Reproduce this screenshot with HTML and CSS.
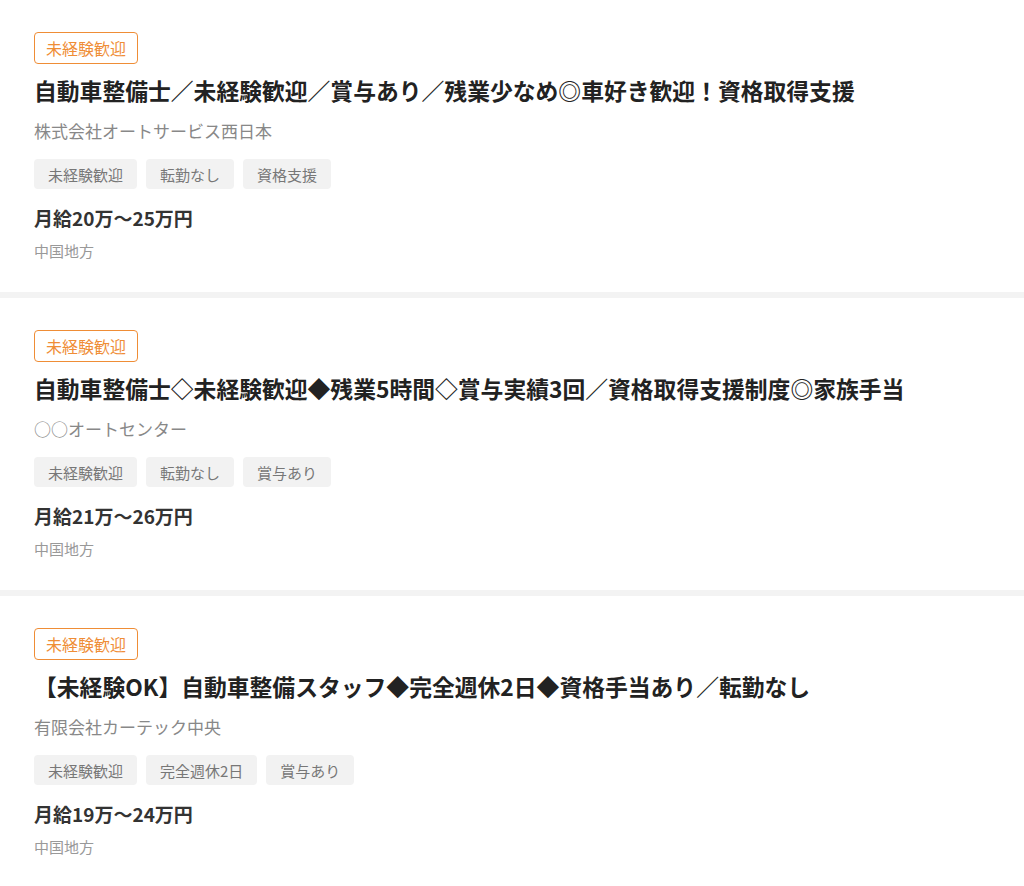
FILE: index.html
```html
<!DOCTYPE html>
<html lang="ja">
<head>
<meta charset="utf-8">
<title>求人一覧</title>
<link rel="stylesheet" href="styles.css">
</head>
<body>
<main class="list">
  <article class="job">
    <span class="badge">未経験歓迎</span>
    <h2 class="title">自動車整備士／未経験歓迎／賞与あり／残業少なめ◎車好き歓迎！資格取得支援</h2>
    <p class="company">株式会社オートサービス西日本</p>
    <ul class="tags">
      <li class="tag">未経験歓迎</li>
      <li class="tag">転勤なし</li>
      <li class="tag">資格支援</li>
    </ul>
    <p class="salary">月給20万～25万円</p>
    <p class="area">中国地方</p>
  </article>
  <article class="job">
    <span class="badge">未経験歓迎</span>
    <h2 class="title">自動車整備士◇未経験歓迎◆残業5時間◇賞与実績3回／資格取得支援制度◎家族手当</h2>
    <p class="company">○○オートセンター</p>
    <ul class="tags">
      <li class="tag">未経験歓迎</li>
      <li class="tag">転勤なし</li>
      <li class="tag">賞与あり</li>
    </ul>
    <p class="salary">月給21万～26万円</p>
    <p class="area">中国地方</p>
  </article>
  <article class="job">
    <span class="badge">未経験歓迎</span>
    <h2 class="title">【未経験OK】自動車整備スタッフ◆完全週休2日◆資格手当あり／転勤なし</h2>
    <p class="company">有限会社カーテック中央</p>
    <ul class="tags">
      <li class="tag">未経験歓迎</li>
      <li class="tag">完全週休2日</li>
      <li class="tag">賞与あり</li>
    </ul>
    <p class="salary">月給19万～24万円</p>
    <p class="area">中国地方</p>
  </article>
</main>
</body>
</html>
```
FILE: styles.css
```css
* { box-sizing: border-box; }
html, body { margin: 0; padding: 0; background: #fff; }
body {
  font-family: "Noto Sans CJK JP", "Noto Sans", sans-serif;
  color: #333;
}
.list { display: flex; flex-direction: column; }
.job {
  display: flex;
  flex-direction: column;
  align-items: flex-start;
  padding: 32px 34px 30px;
  border-bottom: 6px solid #f3f3f3;
}
.badge {
  display: inline-flex;
  align-items: center;
  height: 32px;
  padding: 0 11px;
  border: 1px solid #ef8d36;
  border-radius: 4px;
  color: #ef8d36;
  font-size: 16px;
  line-height: 1;
}
.title {
  margin: 9px 0 0;
  font-size: 22.8px;
  line-height: 36px;
  font-weight: 700;
  color: #222;
}
.company {
  margin: 9px 0 0;
  font-size: 17px;
  line-height: 26px;
  color: #888;
}
.tags {
  display: flex;
  gap: 9px;
  list-style: none;
  margin: 15px 0 0;
  padding: 0;
}
.tag {
  display: flex;
  align-items: center;
  height: 30px;
  padding: 0 14px;
  background: #f2f2f2;
  border-radius: 4px;
  font-size: 15px;
  color: #777;
}
.salary {
  margin: 16px 0 0;
  font-size: 19px;
  line-height: 26px;
  font-weight: 700;
  color: #333;
}
.area {
  margin: 9px 0 0;
  font-size: 15px;
  line-height: 22px;
  color: #999;
}
```
